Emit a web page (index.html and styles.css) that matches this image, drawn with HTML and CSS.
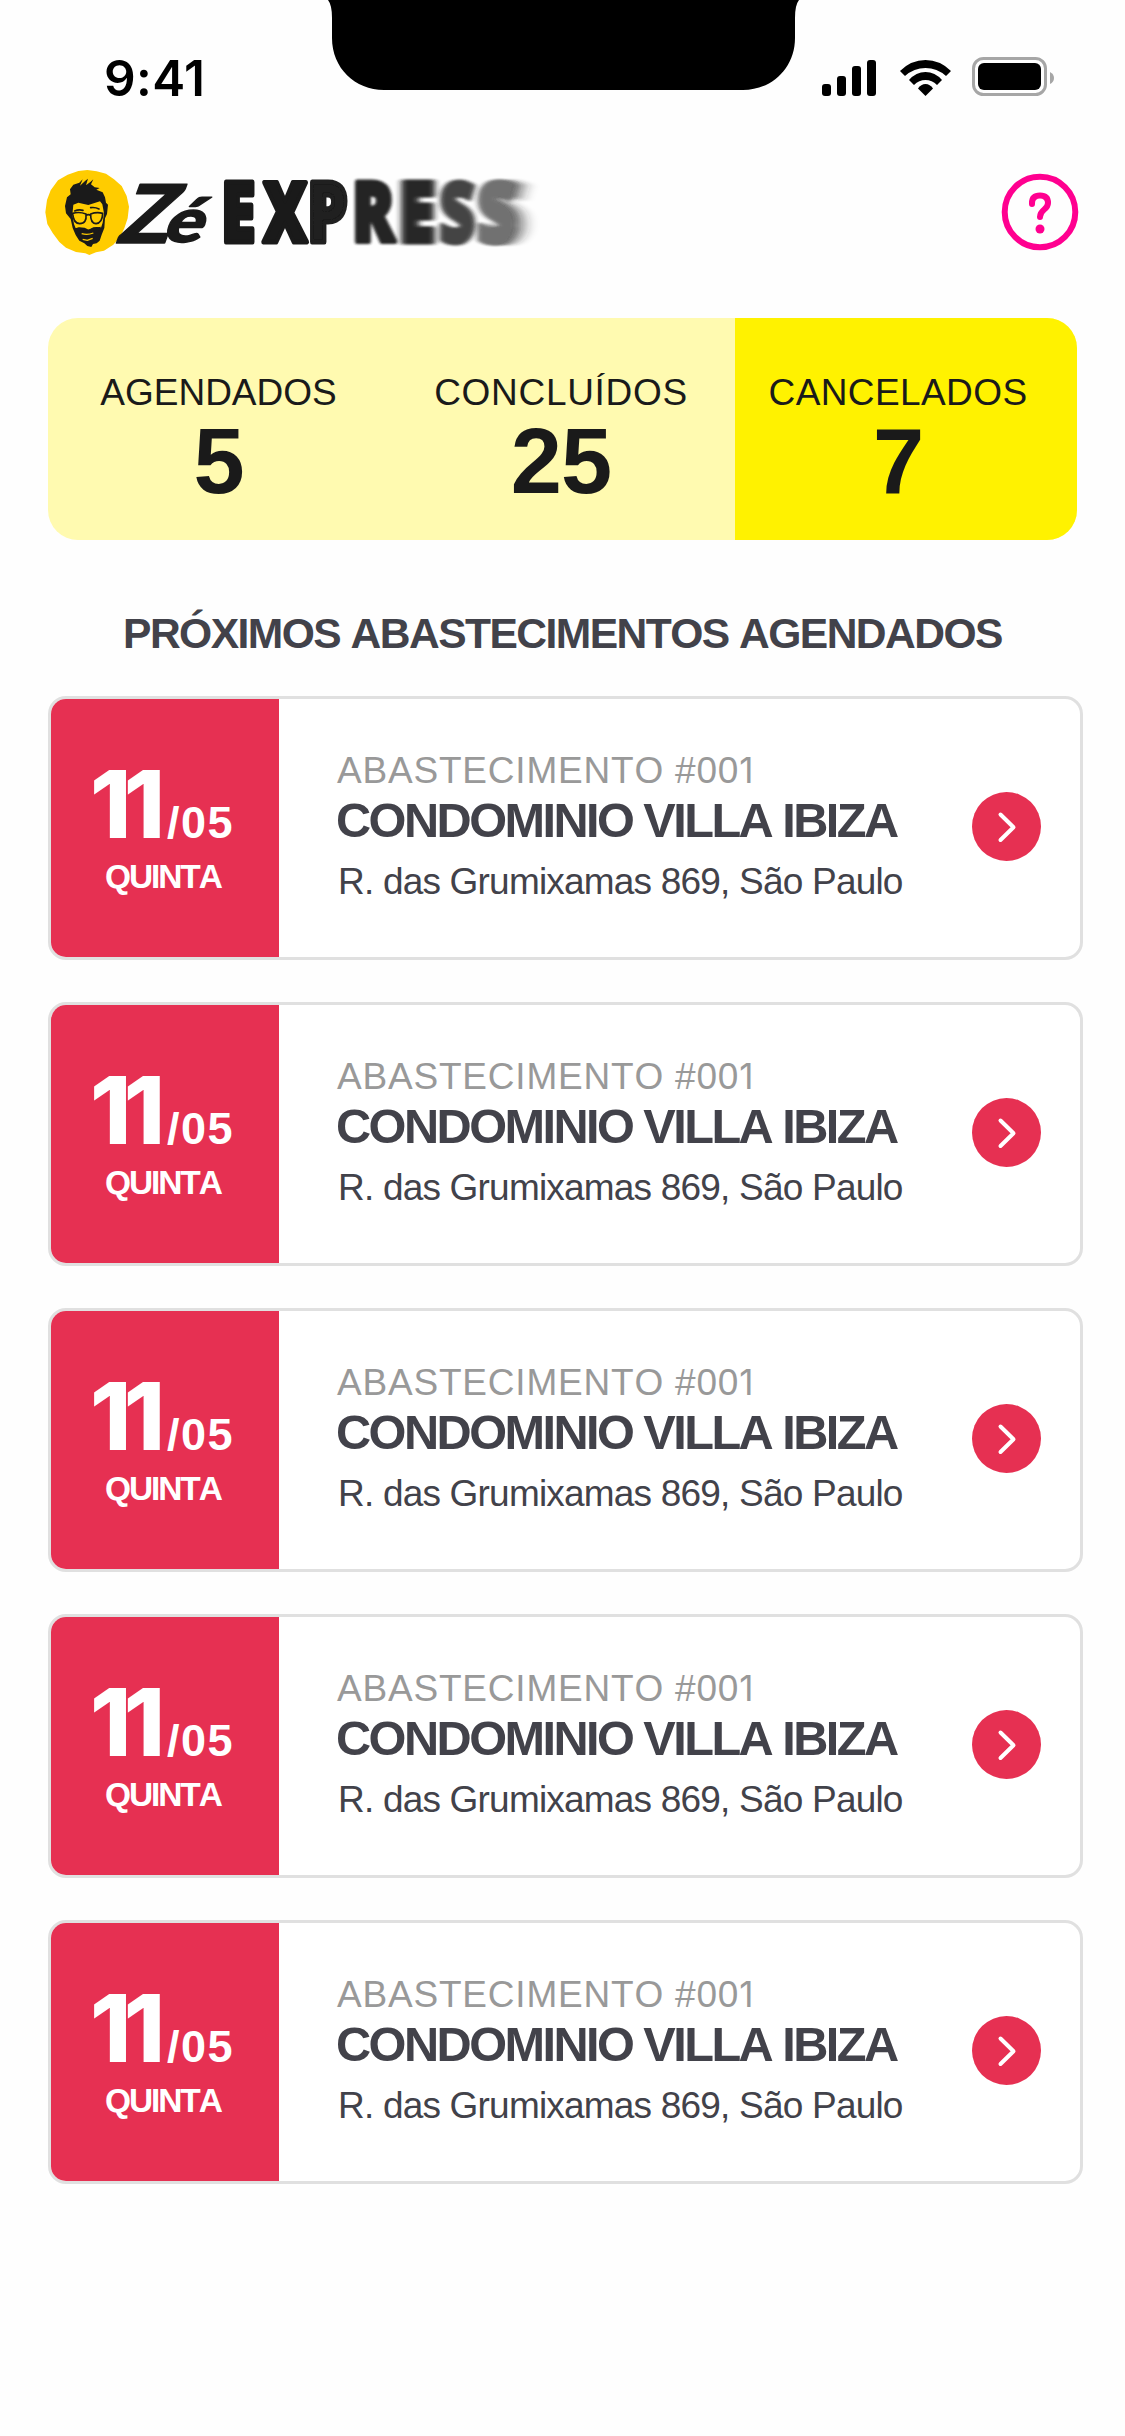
FILE: index.html
```html
<!DOCTYPE html>
<html lang="pt-BR">
<head>
<meta charset="utf-8">
<title>Zé Express</title>
<link rel="stylesheet" href="styles.css">
</head>
<body>
<div class="status">
  <span class="clock">9:41</span>
  <svg class="notch" width="471" height="90" viewBox="0 0 471 90"><path d="M0 0H471Q467 5 467 18V38C467 68 444 90 415 90H56C27 90 4 68 4 38V18Q4 5 0 0Z"/></svg>
  <svg class="signals" width="236" height="42" viewBox="0 0 236 42">
    <rect x="2" y="27" width="9" height="12" rx="3"/><rect x="17" y="19" width="9" height="20" rx="3"/><rect x="32" y="9" width="9" height="30" rx="3"/><rect x="47" y="3" width="9" height="36" rx="3"/>
    <path d="M80 14Q91 3 105.500 3T131 14L126 19Q117 11 105.500 11T85 19Z"/><path d="M89 23Q96 15 105.500 15T122 23L117 28Q112 23 105.500 23T94 28Z"/><path d="M98 31.500Q101 27 105.500 27T113 31.500L105.500 39Z"/>
    <rect x="153.500" y="1.500" width="72" height="36" rx="10" fill="none" stroke="#a6a6a6" stroke-width="3"/><rect x="158" y="6" width="63" height="27" rx="6"/><path d="M230 15V27Q234 25 234 21T230 15Z" fill="#a6a6a6"/>
  </svg>
</div>

<header class="header">
  <svg class="logo" width="530" height="120" viewBox="0 0 530 120">
    <defs>
      <filter id="b1" x="-30%" width="160%"><feGaussianBlur stdDeviation="1 .6"/></filter>
      <filter id="b2" x="-30%" width="160%"><feGaussianBlur stdDeviation="2 .8"/></filter>
      <filter id="b3" x="-40%" width="180%"><feGaussianBlur stdDeviation="3.500 1"/></filter>
      <filter id="b4" x="-60%" width="240%">
        <feGaussianBlur in="SourceGraphic" stdDeviation="9 1"/>
        <feOffset dx="10" result="trail"/>
        <feGaussianBlur in="SourceGraphic" stdDeviation="3.500 1" result="near"/>
        <feMerge><feMergeNode in="trail"/><feMergeNode in="near"/></feMerge>
      </filter>
    </defs>
    <g transform="scale(.33333)">
      <path fill="#fc0" d="M145 63L172 60L200 64L228 71L252 88L275 108L290 138L297 170L293 205L283 235L270 262L250 284L222 302L198 307L178 315L166 310L138 306L108 293L88 276L68 249L52 222L46 187L51 150L62 121L84 91L113 74Z"/>
      <path fill="#1a1a1a" d="M108 190L105 168L111 142L122 133L120 118L130 104L148 98L158 88L150 107L166 92L174 86L168 106L181 96L190 88L183 103L194 112L209 114L199 119L218 127L225 142L228 158L234 164L231 192L225 205L223 234L215 254L209 272L200 280L189 282L184 291L172 288L163 280L148 272L137 255L128 234L122 207Z"/>
      <path fill="#fc0" d="M130 164L145 158L175 165L210 154L217 163L222 190L218 218L213 233L201 231L190 232L176 239L164 233L147 232L137 235L132 222L127 194Z"/>
      <g fill="none" stroke="#1a1a1a" stroke-width="5" stroke-linecap="round">
        <path d="M134 183Q146 177 159 181M182 173Q196 171 207 177"/>
        <path d="M128 190Q148 184 168 192Q171 221 149 221Q130 220 128 190ZM182 192Q200 185 218 190Q217 220 198 221Q181 220 182 192ZM168 196Q175 192 182 196"/>
      </g>
      <path fill="#1a1a1a" d="M131 236Q148 230 162 237L172 240L190 234L213 230L205 246Q190 256 177 250Q160 257 141 248Z"/>
      <path d="M155 251Q173 256 190 249M158 268L172 271L188 265" stroke="#fc0" stroke-width="4" fill="none"/>
    </g>
    <g class="script">
      <text transform="translate(85 93) skewX(-20) scale(1.070 1)" font-size="81">Z</text>
      <text transform="translate(131 92) skewX(-20) scale(1.200 1)" font-size="61">é</text>
    </g>
    <g class="word">
      <text transform="translate(191 92) scale(.76 1)">E</text>
      <text transform="translate(233 92) scale(.74 1)">X</text>
      <text transform="translate(277 92) scale(.78 1)" filter="url(#b1)" opacity=".98">P</text>
      <text transform="translate(322 92) scale(.76 1)" filter="url(#b2)" opacity=".96">R</text>
      <text transform="translate(368 92) scale(.84 1)" filter="url(#b3)" opacity=".95">E</text>
      <text transform="translate(409 92) scale(.76 1)" filter="url(#b3)" opacity=".82">S</text>
      <text transform="translate(447 92) scale(.8 1)" filter="url(#b4)" opacity=".62">S</text>
    </g>
  </svg>
  <svg width="78" height="78" viewBox="0 0 78 78" fill="none" stroke="#ff0090" stroke-width="6"><circle cx="39" cy="39" r="35.300"/><path d="M31 31V30Q31 22.500 39 22.500Q47 22.500 47 30C47 37 39 36 39 44" stroke-linecap="round"/><circle cx="39" cy="56" r="4.500" fill="#ff0090" stroke="none"/></svg>
</header>

<section class="stats">
  <div class="stat scheduled"><div class="label">AGENDADOS</div><div class="value">5</div></div>
  <div class="stat done"><div class="label">CONCLUÍDOS</div><div class="value">25</div></div>
  <div class="stat canceled"><div class="label">CANCELADOS</div><div class="value">7</div></div>
</section>

<h1 class="heading">PRÓXIMOS ABASTECIMENTOS AGENDADOS</h1>

<main class="list">
  <article class="card">
    <div class="date"><div class="day"><span class="number">11</span><span class="month">/05</span></div><div class="weekday">QUINTA</div></div>
    <div class="info"><div class="code">ABASTECIMENTO #00<span class="one">1</span></div><div class="name">CONDOMINIO VILLA IBIZA</div><div class="address">R. das Grumixamas 869, São Paulo</div></div>
    <svg class="go" viewBox="0 0 69 69"><circle cx="34.500" cy="34.500" r="34.500"/><path d="M28.500 22.500L41.500 35.300L28.500 48"/></svg>
  </article>
  <article class="card">
    <div class="date"><div class="day"><span class="number">11</span><span class="month">/05</span></div><div class="weekday">QUINTA</div></div>
    <div class="info"><div class="code">ABASTECIMENTO #00<span class="one">1</span></div><div class="name">CONDOMINIO VILLA IBIZA</div><div class="address">R. das Grumixamas 869, São Paulo</div></div>
    <svg class="go" viewBox="0 0 69 69"><circle cx="34.500" cy="34.500" r="34.500"/><path d="M28.500 22.500L41.500 35.300L28.500 48"/></svg>
  </article>
  <article class="card">
    <div class="date"><div class="day"><span class="number">11</span><span class="month">/05</span></div><div class="weekday">QUINTA</div></div>
    <div class="info"><div class="code">ABASTECIMENTO #00<span class="one">1</span></div><div class="name">CONDOMINIO VILLA IBIZA</div><div class="address">R. das Grumixamas 869, São Paulo</div></div>
    <svg class="go" viewBox="0 0 69 69"><circle cx="34.500" cy="34.500" r="34.500"/><path d="M28.500 22.500L41.500 35.300L28.500 48"/></svg>
  </article>
  <article class="card">
    <div class="date"><div class="day"><span class="number">11</span><span class="month">/05</span></div><div class="weekday">QUINTA</div></div>
    <div class="info"><div class="code">ABASTECIMENTO #00<span class="one">1</span></div><div class="name">CONDOMINIO VILLA IBIZA</div><div class="address">R. das Grumixamas 869, São Paulo</div></div>
    <svg class="go" viewBox="0 0 69 69"><circle cx="34.500" cy="34.500" r="34.500"/><path d="M28.500 22.500L41.500 35.300L28.500 48"/></svg>
  </article>
  <article class="card">
    <div class="date"><div class="day"><span class="number">11</span><span class="month">/05</span></div><div class="weekday">QUINTA</div></div>
    <div class="info"><div class="code">ABASTECIMENTO #00<span class="one">1</span></div><div class="name">CONDOMINIO VILLA IBIZA</div><div class="address">R. das Grumixamas 869, São Paulo</div></div>
    <svg class="go" viewBox="0 0 69 69"><circle cx="34.500" cy="34.500" r="34.500"/><path d="M28.500 22.500L41.500 35.300L28.500 48"/></svg>
  </article>
</main>
</body>
</html>
```
FILE: styles.css
```css
* { box-sizing: border-box; }
body {
  margin: 0;
  width: 1125px;
  height: 2436px;
  overflow: hidden;
  background: #fefefe;
  color: #42424a;
  font-family: "Liberation Sans", Arial, sans-serif;
  font-kerning: none;
}
svg { display: block; flex: none; }
.status { display: flex; height: 150px; align-items: flex-start; }
.clock {
  width: 328px;
  padding: 48px 0 0 104px;
  font: 600 49.5px/60px Inter, sans-serif;
  letter-spacing: .4px;
  color: #000;
}
.signals { margin: 57px 0 0 21px; }
.header {
  display: flex;
  justify-content: space-between;
  height: 168px;
  padding: 0 46px 0 30px;
}
.header > svg:last-child { margin-top: 23px; }
.logo { overflow: visible; }
.word text {
  font: 800 83px "Open Sans", sans-serif;
  fill: #1a1a1a;
  stroke: #1a1a1a;
  stroke-width: 5px;
  stroke-linejoin: round;
}
.script text {
  font-family: Lato, sans-serif;
  font-weight: 900;
  fill: #1a1a1a;
  stroke: #1a1a1a;
  stroke-width: 1.5px;
  stroke-linejoin: round;
}
.stats {
  display: grid;
  grid-template-columns: 343px 344px 342px;
  width: 1029px;
  height: 222px;
  margin-left: 48px;
  border-radius: 30px;
  overflow: hidden;
  background: #fffab0;
  color: #1a1a1a;
  text-align: center;
}
.stat { padding-top: 55px; }
.scheduled { padding-right: 2px; }
.label { font-size: 37px; line-height: 40px; }
.value { margin-top: 4px; font-size: 92px; font-weight: 700; line-height: 88px; letter-spacing: -1px; }
.done { padding-right: 4px; }
.done .label { letter-spacing: .7px; }
.canceled { padding-right: 16px; background: #fff200; }
.canceled .label { letter-spacing: .4px; }
.heading {
  margin: 69px 0 0;
  font-size: 42.6px;
  line-height: 48px;
  letter-spacing: -1.55px;
  text-align: center;
}
.list { display: grid; gap: 42px; margin: 39px 0 0 48px; width: 1035px; }
.card {
  display: flex;
  height: 264px;
  border: 3px solid #e0e0e0;
  border-radius: 18px;
  overflow: hidden;
  background: #fff;
}
.date { width: 228px; padding-top: 60px; background: #e63052; color: #fff; font-weight: 700; }
.day { display: flex; align-items: baseline; height: 90px; padding-left: 39px; white-space: nowrap; }
.number { width: 77px; font: 800 93.5px/90px Inter, sans-serif; letter-spacing: -7.5px; }
.month { font-size: 45px; line-height: 50px; letter-spacing: 1.5px; }
.weekday { margin-top: 10px; padding-left: 54px; font-size: 33.5px; line-height: 36px; letter-spacing: -2.1px; }
.info { width: 693px; padding: 52px 0 0 58px; white-space: nowrap; }
.code { font-size: 37px; line-height: 40px; letter-spacing: .8px; color: #999; }
.one { font: 400 35px/1 Inter, sans-serif; }
.name { margin: 4px 0 0 -1px; font-size: 48.7px; font-weight: 700; line-height: 50px; letter-spacing: -2.55px; }
.address { margin: 17px 0 0 1px; font-size: 37px; line-height: 40px; letter-spacing: -.8px; }
.go { width: 69px; height: 69px; margin-top: 93px; }
.go circle { fill: #e63052; }
.go path { fill: none; stroke: #fff; stroke-width: 4px; stroke-linecap: round; stroke-linejoin: round; }
```
